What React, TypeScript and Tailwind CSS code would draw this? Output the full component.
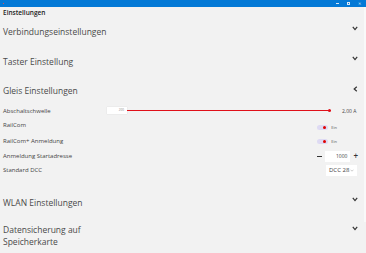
import React from "react";

const font = { fontFamily: '"Open Sans", "Noto Sans", sans-serif' };

function ChevronDown() {
  return (
    <svg width="6" height="5" viewBox="0 0 6 5" className="block">
      <path d="M0.8 0.8 L3 3.6 L5.2 0.8" fill="none" stroke="#333" strokeWidth="1.2" />
    </svg>
  );
}

function ChevronLeft() {
  return (
    <svg width="5" height="6" viewBox="0 0 5 6" className="block">
      <path d="M3.8 0.8 L1.2 3 L3.8 5.2" fill="none" stroke="#333" strokeWidth="1.2" />
    </svg>
  );
}

function Header({ title }: { title: string }) {
  return (
    <div className="flex h-[30px] items-center justify-between pl-[3px] pr-[8px]">
      <span className="text-[8.5px] leading-[12px] text-[#4a4a4a]">{title}</span>
      <div className="mb-[8px]">
        <ChevronDown />
      </div>
    </div>
  );
}

function Toggle() {
  return (
    <div className="flex items-center gap-[3px]">
      <div className="flex h-[5px] w-[11px] items-center justify-end rounded-full bg-[#dedaf3] pr-[2px]">
        <div className="h-[3px] w-[3px] rounded-full bg-[#e00000]" />
      </div>
      <span className="text-[4px] leading-[5px] text-[#555]">Ein</span>
    </div>
  );
}

export default function App() {
  return (
    <div style={font} className="relative h-[253px] w-[366px] overflow-hidden bg-[#f2f2f2]">
      {/* title bar */}
      <div className="flex h-[7px] items-center justify-between bg-[#0479d6] pl-[3px] pr-[5px]">
        <div className="h-[1px] w-[1px] bg-[#e05050]" />
        <div className="flex items-center gap-[8px]">
          <div className="h-[1px] w-[3px] bg-[#d8e6f5]" />
          <div className="h-[3px] w-[3px] border border-[#d8e6f5]" />
          <span className="text-[4px] leading-[4px] text-[#d8e6f5]">✕</span>
        </div>
      </div>

      {/* scrollbar */}
      <div className="absolute right-0 top-[7px] h-[215px] w-[2px] bg-[#f9f9f9]" />

      <div className="flex h-[10px] items-center pl-[3px]">
        <span className="text-[6.5px] font-semibold leading-[9px] text-[#222]">Einstellungen</span>
      </div>

      <Header title="Verbindungseinstellungen" />
      <Header title="Taster Einstellung" />
      <div className="flex h-[27px] items-center justify-between pl-[3px] pr-[8px]">
        <span className="text-[8.5px] leading-[12px] text-[#4a4a4a]">Gleis Einstellungen</span>
        <div className="mb-[4px]">
          <ChevronLeft />
        </div>
      </div>

      {/* Abschaltschwelle */}
      <div className="flex h-[13px] items-center pl-[3px] pr-[8px]">
        <span className="w-[104px] text-[6px] leading-[8px] text-[#444]">Abschaltschwelle</span>
        <div className="flex flex-1 items-center">
          <div className="flex h-[7px] w-[20px] items-center justify-end bg-white pr-[3px] shadow-[0_0_1px_rgba(0,0,0,0.15)]">
            <span className="text-[3px] leading-[3px] text-[#888]">200</span>
          </div>
          <div className="relative h-[1px] flex-1 bg-[#e0101a]">
            <div className="absolute right-0 top-[-1px] h-[3px] w-[3px] rounded-full bg-[#e0101a]" />
          </div>
          <span className="ml-[11px] w-[16px] text-[5px] leading-[6px] text-[#444]">2,00 A</span>
        </div>
      </div>

      {/* RailCom */}
      <div className="flex h-[16px] items-center justify-between pl-[3px] pr-[29px]">
        <span className="text-[6px] leading-[8px] text-[#444]">RailCom</span>
        <div className="mt-[4px]">
          <Toggle />
        </div>
      </div>

      {/* RailCom+ */}
      <div className="flex h-[16px] items-center justify-between pl-[3px] pr-[29px]">
        <span className="text-[6px] leading-[8px] text-[#444]">RailCom+ Anmeldung</span>
        <Toggle />
      </div>

      {/* Startadresse */}
      <div className="flex h-[14px] items-center justify-between pl-[3px] pr-[8px]">
        <span className="text-[6px] leading-[8px] text-[#444]">Anmeldung Startadresse</span>
        <div className="flex items-center">
          <div className="h-[1px] w-[5px] bg-[#333]" />
          <div className="ml-[3px] flex h-[11px] w-[25px] items-center justify-end bg-white pr-[3px]">
            <span className="text-[5px] leading-[6px] text-[#444]">1000</span>
          </div>
          <span className="ml-[3px] text-[8px] font-semibold leading-[8px] text-[#333]">+</span>
        </div>
      </div>

      {/* Standard DCC */}
      <div className="flex h-[14px] items-center justify-between pl-[3px] pr-[9px]">
        <span className="text-[6px] leading-[8px] text-[#444]">Standard DCC</span>
        <div className="flex h-[11px] w-[31px] items-center justify-between bg-white pl-[3px] pr-[3px]">
          <span className="text-[6px] leading-[8px] text-[#444]">DCC 28</span>
          <svg width="4" height="3" viewBox="0 0 4 3">
            <path d="M0.5 0.7 L2 2.2 L3.5 0.7" fill="none" stroke="#aaa" strokeWidth="0.6" />
          </svg>
        </div>
      </div>

      <div className="h-[11px]" />
      <Header title="WLAN Einstellungen" />

      <div className="flex items-start justify-between pl-[3px] pr-[8px] pt-[6px]">
        <span className="text-[8.5px] leading-[12px] text-[#4a4a4a]">
          Datensicherung auf
          <br />
          Speicherkarte
        </span>
        <div className="mt-[2px]">
          <ChevronDown />
        </div>
      </div>
    </div>
  );
}
